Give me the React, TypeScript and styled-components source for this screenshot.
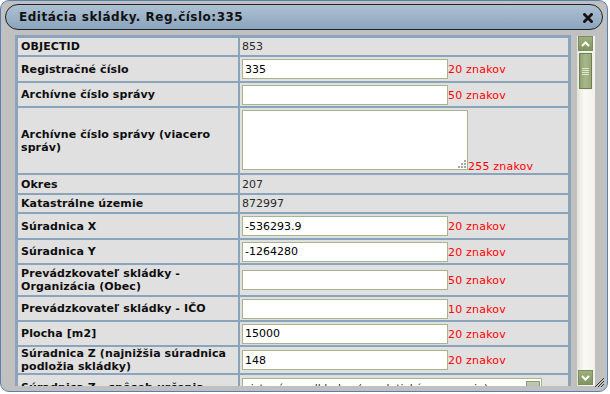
import styled, { createGlobalStyle } from 'styled-components'

const GlobalStyle = createGlobalStyle`
  html, body {
    margin: 0;
    padding: 0;
    background: #ffffff;
  }
  body {
    font-family: 'DejaVu Sans', Verdana, sans-serif;
  }
`

// Dialog frame
const Dialog = styled.div`
  position: relative;
  width: 608px;
  height: 392px;
  box-sizing: border-box;
  border: 1px solid #5a80b0;
  border-radius: 9px;
  background: #c0c0c0;
  padding: 3px 4px 0 4px;
  overflow: hidden;
`

const TitleBar = styled.div`
  height: 26px;
  box-sizing: border-box;
  border: 1px solid #1e2328;
  border-radius: 13px;
  background: linear-gradient(#adc0d2, #8ba5bd);
  display: flex;
  align-items: center;
  justify-content: space-between;
  padding: 0 9px 0 13px;
`

const Title = styled.div`
  font-size: 12px;
  font-weight: bold;
  color: #111;
  letter-spacing: 0.5px;
`

const CloseButton = styled.div`
  width: 10px;
  height: 10px;
  display: flex;
  margin-top: 1px;
`

const Body = styled.div`
  display: flex;
  margin-top: 5px;
  padding-left: 10px;
`

const ScrollArea = styled.div`
  width: 556px;
  height: 351px;
  overflow: hidden;
`

const Table = styled.table`
  width: 556px;
  border: 1px solid #8ba4bc;
  border-spacing: 2px;
  background: #8ba4bc;
  table-layout: fixed;
`

const LabelCell = styled.td<{ $h: number }>`
  box-sizing: border-box;
  width: 220px;
  height: ${(p) => p.$h}px;
  padding: 0 3px;
  background: #e0e0e0;
  font-size: 11px;
  line-height: 13px;
  font-weight: bold;
  color: #0e0e0e;
  letter-spacing: 0.1px;
  vertical-align: middle;
`

const ValueCell = styled.td`
  box-sizing: border-box;
  width: 328px;
  padding: 0 2px;
  background: #e0e0e0;
  font-size: 11px;
  line-height: 13px;
  color: #2a2a2a;
  vertical-align: middle;
  white-space: nowrap;
`

const TextInput = styled.input`
  box-sizing: border-box;
  width: 206px;
  height: 20px;
  border: 1px solid #a5b68c;
  background: #ffffff;
  padding: 0 2px;
  margin: 0;
  font-family: 'DejaVu Sans', Verdana, sans-serif;
  font-size: 11px;
  color: #000;
  outline: none;
  vertical-align: middle;
`

const AreaWrap = styled.span`
  position: relative;
  display: inline-block;
  vertical-align: baseline;
`

const TextArea = styled.textarea`
  display: block;
  box-sizing: border-box;
  width: 226px;
  height: 60px;
  margin: 1px 0 0 0;
  border: 1px solid #a5b68c;
  background: #ffffff;
  resize: none;
  outline: none;
`

const Grip = styled.svg`
  position: absolute;
  right: 2px;
  bottom: 2px;
`

const Limit = styled.span`
  color: #ff0000;
  font-size: 11px;
  letter-spacing: 0.2px;
  vertical-align: middle;
`

const AreaLimit = styled.span`
  color: #ff0000;
  font-size: 11px;
  letter-spacing: 0.2px;
`

const SelectBox = styled.div`
  box-sizing: border-box;
  width: 300px;
  height: 20px;
  margin-top: 2px;
  border: 1px solid #a5b68c;
  background: #ffffff;
  display: flex;
  align-items: center;
  justify-content: space-between;
  padding: 0 1px 0 2px;
  color: #333;
  overflow: hidden;
`

const SelectButton = styled.div`
  width: 14px;
  height: 15px;
  box-sizing: border-box;
  border: 1px solid #8c9a74;
  background: linear-gradient(#c4cdb2, #9aa882);
  flex: none;
`

// Scrollbar
const Track = styled.div`
  margin-left: 6px;
  width: 18px;
  height: 350px;
  margin-top: 1px;
  box-sizing: border-box;
  padding: 0 2px 0 1px;
  background: linear-gradient(90deg, #e2e2d8, #fafaf4 40%, #f2f2ea);
  display: flex;
  flex-direction: column;
`

const ArrowButton = styled.div<{ $down?: boolean }>`
  width: 15px;
  height: 15px;
  box-sizing: border-box;
  border: 1px solid #e8ecdc;
  outline: 1px solid #7d8d5f;
  outline-offset: -1px;
  background: linear-gradient(#9db07c, #82955f);
  display: flex;
  align-items: center;
  justify-content: center;
  margin-top: ${(p) => (p.$down ? 'auto' : '0')};
  margin-bottom: ${(p) => (p.$down ? '1px' : '0')};
`

const Thumb = styled.div`
  width: 15px;
  height: 38px;
  margin-top: 1px;
  box-sizing: border-box;
  border: 1px solid #eef0e4;
  outline: 1px solid #6f7f52;
  outline-offset: -2px;
  background: linear-gradient(90deg, #8d9f6d, #a9b88c 50%, #93a474);
  display: flex;
  flex-direction: column;
  align-items: center;
  justify-content: center;
  gap: 1px;
`

const ThumbLine = styled.div`
  width: 7px;
  height: 1px;
  background: #dfe6cf;
`

const ResizeGrip = styled.svg`
  position: absolute;
  right: 2px;
  bottom: 3px;
`

const rows = [
  { label: 'OBJECTID', h: 17, kind: 'text', value: '853' },
  { label: 'Registračné číslo', h: 24, kind: 'input', value: '335', limit: '20 znakov' },
  { label: 'Archívne číslo správy', h: 23, kind: 'input', value: '', limit: '50 znakov' },
  { label: 'Archívne číslo správy (viacero správ)', h: 65, kind: 'area', value: '', limit: '255 znakov' },
  { label: 'Okres', h: 18, kind: 'text', value: '207' },
  { label: 'Katastrálne územie', h: 17, kind: 'text', value: '872997' },
  { label: 'Súradnica X', h: 24, kind: 'input', value: '-536293.9', limit: '20 znakov' },
  { label: 'Súradnica Y', h: 23, kind: 'input', value: '-1264280', limit: '20 znakov' },
  { label: 'Prevádzkovateľ skládky - Organizácia (Obec)', h: 30, kind: 'input', value: '', limit: '50 znakov' },
  { label: 'Prevádzkovateľ skládky - IČO', h: 23, kind: 'input', value: '', limit: '10 znakov' },
  { label: 'Plocha [m2]', h: 23, kind: 'input', value: '15000', limit: '20 znakov' },
  { label: 'Súradnica Z (najnižšia súradnica podložia skládky)', h: 26, kind: 'input', value: '148', limit: '20 znakov' },
  { label: 'Súradnica Z - spôsob určenia', h: 24, kind: 'select', value: 'zistená z podkladov (geodetické zameranie)' },
]

export default function App() {
  return (
    <>
      <GlobalStyle />
      <Dialog>
        <TitleBar>
          <Title>Editácia skládky. Reg.číslo:335</Title>
          <CloseButton>
            <svg width="10" height="10" viewBox="0 0 10 10">
              <path d="M1.5 1.5 L8.5 8.5 M8.5 1.5 L1.5 8.5" stroke="#141414" strokeWidth="2.8" strokeLinecap="square" />
            </svg>
          </CloseButton>
        </TitleBar>
        <Body>
          <ScrollArea>
            <Table>
              <tbody>
                {rows.map((row) => (
                  <tr key={row.label}>
                    <LabelCell $h={row.h}>{row.label}</LabelCell>
                    <ValueCell>
                      {row.kind === 'text' && row.value}
                      {row.kind === 'input' && (
                        <>
                          <TextInput defaultValue={row.value} />
                          <Limit>{row.limit}</Limit>
                        </>
                      )}
                      {row.kind === 'area' && (
                        <>
                          <AreaWrap>
                            <TextArea />
                            <Grip width="8" height="8" viewBox="0 0 8 8">
                              <g fill="#a8a8a0">
                                <rect x="6" y="0" width="2" height="2" />
                                <rect x="3" y="3" width="2" height="2" />
                                <rect x="6" y="3" width="2" height="2" />
                                <rect x="0" y="6" width="2" height="2" />
                                <rect x="3" y="6" width="2" height="2" />
                                <rect x="6" y="6" width="2" height="2" />
                              </g>
                            </Grip>
                          </AreaWrap>
                          <AreaLimit>{row.limit}</AreaLimit>
                        </>
                      )}
                      {row.kind === 'select' && (
                        <SelectBox>
                          <span>{row.value}</span>
                          <SelectButton />
                        </SelectBox>
                      )}
                    </ValueCell>
                  </tr>
                ))}
              </tbody>
            </Table>
          </ScrollArea>
          <Track>
            <ArrowButton>
              <svg width="9" height="6" viewBox="0 0 9 6">
                <path d="M1 5 L4.5 1.5 L8 5" stroke="#fff" strokeWidth="2" fill="none" />
              </svg>
            </ArrowButton>
            <Thumb>
              <ThumbLine />
              <ThumbLine />
              <ThumbLine />
              <ThumbLine />
            </Thumb>
            <ArrowButton $down>
              <svg width="9" height="6" viewBox="0 0 9 6">
                <path d="M1 1 L4.5 4.5 L8 1" stroke="#fff" strokeWidth="2" fill="none" />
              </svg>
            </ArrowButton>
          </Track>
        </Body>
        <ResizeGrip width="11" height="11" viewBox="0 0 11 11">
          <path d="M10 1 L1 10 M10 4 L4 10 M10 7 L7 10" stroke="#333" strokeWidth="1" />
        </ResizeGrip>
      </Dialog>
    </>
  )
}
